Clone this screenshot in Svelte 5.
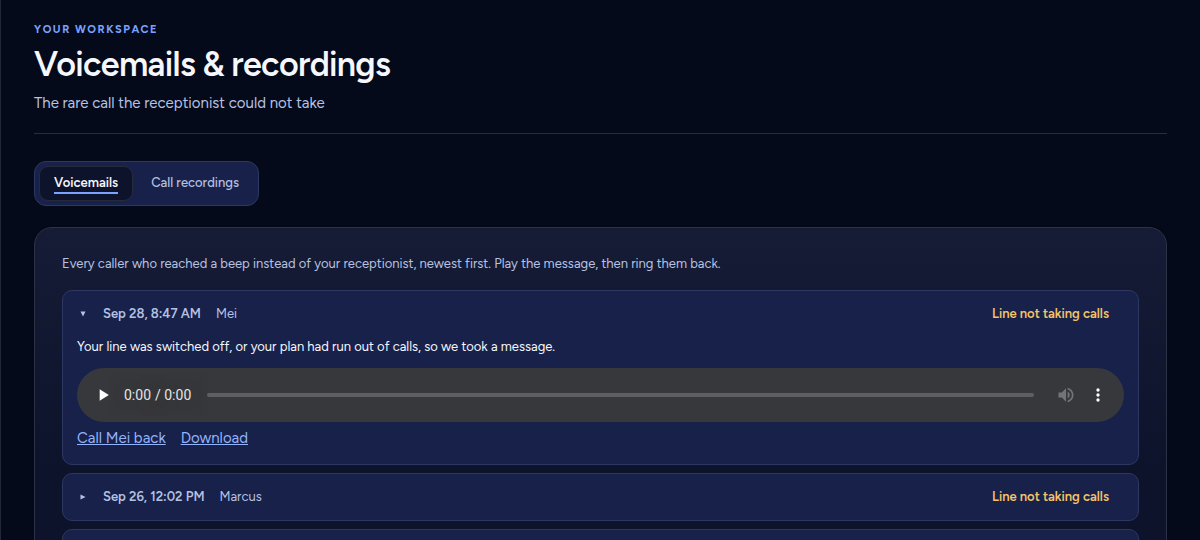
<script>
    let tab = $state('voicemails');

    const tabs = [
        { id: 'voicemails', label: 'Voicemails' },
        { id: 'recordings', label: 'Call recordings' }
    ];

    const voicemails = [
        { when: 'Sep 28, 8:47 AM', name: 'Mei', phone: '+15550100', open: true },
        { when: 'Sep 26, 12:02 PM', name: 'Marcus', phone: '+15550101', open: false },
        { when: 'Sep 25, 4:15 PM', name: 'Dana', phone: '+15550102', open: false }
    ];
</script>

<main>
    <header>
        <p class="eyebrow">Your workspace</p>
        <h1>Voicemails &amp; recordings</h1>
        <p class="subtitle">The rare call the receptionist could not take</p>
    </header>

    <div class="tabs" role="tablist">
        {#each tabs as t}
            <button role="tab" aria-selected={tab === t.id} onclick={() => (tab = t.id)}>
                <span>{t.label}</span>
            </button>
        {/each}
    </div>

    <section class="panel">
        <p class="intro">
            Every caller who reached a beep instead of your receptionist, newest first. Play the message, then ring them back.
        </p>

        {#each voicemails as vm}
            <details bind:open={vm.open}>
                <summary>
                    <svg class="marker" viewBox="0 0 6 6" aria-hidden="true"><path d="M0.5 0.5L5.5 3L0.5 5.5z" /></svg>
                    <strong>{vm.when}</strong>
                    <span>{vm.name}</span>
                    <em>Line not taking calls</em>
                </summary>
                <div class="message">
                    <p>Your line was switched off, or your plan had run out of calls, so we took a message.</p>
                    <audio controls preload="none" src="data:audio/wav;base64,"></audio>
                    <div class="links">
                        <a href="tel:{vm.phone}">Call {vm.name} back</a>
                        <a href="#download">Download</a>
                    </div>
                </div>
            </details>
        {/each}
    </section>
</main>

<style>
    :global(body) {
        background: #050a1b;
        color-scheme: dark;
        scrollbar-width: none;
    }

    main {
        box-sizing: border-box;
        min-height: 100vh;
        padding: 21px 33px 32px;
        border-left: 1px solid #232839;
        font-family: Figtree, Lato, sans-serif;
        font-size: 13px;
        line-height: 20px;
        color: #b6c2e2;
    }

    p, h1 {
        margin: 0;
    }

    header {
        padding-bottom: 19px;
        border-bottom: 1px solid #282d3f;
    }

    .eyebrow {
        font-size: 11px;
        line-height: 18px;
        font-weight: 700;
        letter-spacing: 0.14em;
        text-transform: uppercase;
        color: #7ba2ff;
    }

    h1 {
        margin: 6px 0 7px;
        font-size: 34px;
        line-height: 40px;
        font-weight: 600;
        letter-spacing: -0.02em;
        color: #f5f7fd;
    }

    .subtitle {
        font-size: 15px;
        line-height: 22px;
    }

    .tabs {
        display: flex;
        gap: 3px;
        width: fit-content;
        margin: 27px 0 21px;
        padding: 4px;
        border: 1px solid #2c3862;
        border-radius: 12px;
        background: #18214a;
    }

    button {
        padding: 6px 14px;
        border: 1px solid transparent;
        border-radius: 9px;
        background: none;
        color: #b6c2e2;
        font: inherit;
        font-weight: 500;
        cursor: pointer;
    }

    button span {
        display: block;
        border-bottom: 2px solid transparent;
        line-height: 19px;
    }

    button[aria-selected='true'] {
        border-color: #262b3c;
        background: #0d132b;
        color: #f5f7fd;
        font-weight: 600;
    }

    button[aria-selected='true'] span {
        border-color: #7ba2ff;
    }

    .panel {
        padding: 26px 27px;
        border: 1px solid #2d3246;
        border-radius: 18px;
        background: linear-gradient(#171c36, #0d132b 240px);
        box-shadow: 0 1px 3px #00000080;
    }

    .intro {
        margin-bottom: 16px;
    }

    details {
        margin-bottom: 8px;
        border: 1px solid #2c3862;
        border-radius: 10px;
        background: #18214a;
    }

    summary {
        display: flex;
        align-items: center;
        gap: 15px;
        padding: 13px 29px 13px 17px;
        list-style: none;
        cursor: pointer;
    }

    .marker {
        width: 6px;
        height: 6px;
        margin-right: 2px;
        fill: currentColor;
    }

    details[open] .marker {
        transform: rotate(90deg);
    }

    strong {
        font-weight: 600;
    }

    em {
        margin-left: auto;
        font-style: normal;
        font-weight: 600;
        color: #f5c469;
    }

    .message {
        padding: 0 14px 15px;
    }

    .message p {
        color: #f5f7fd;
    }

    audio {
        display: block;
        width: 100%;
        height: 55px;
        margin: 10px 0 5px;
    }

    .links {
        display: flex;
        gap: 15px;
        font-size: 15px;
        line-height: 22px;
    }

    a {
        color: #93b4fb;
    }
</style>
